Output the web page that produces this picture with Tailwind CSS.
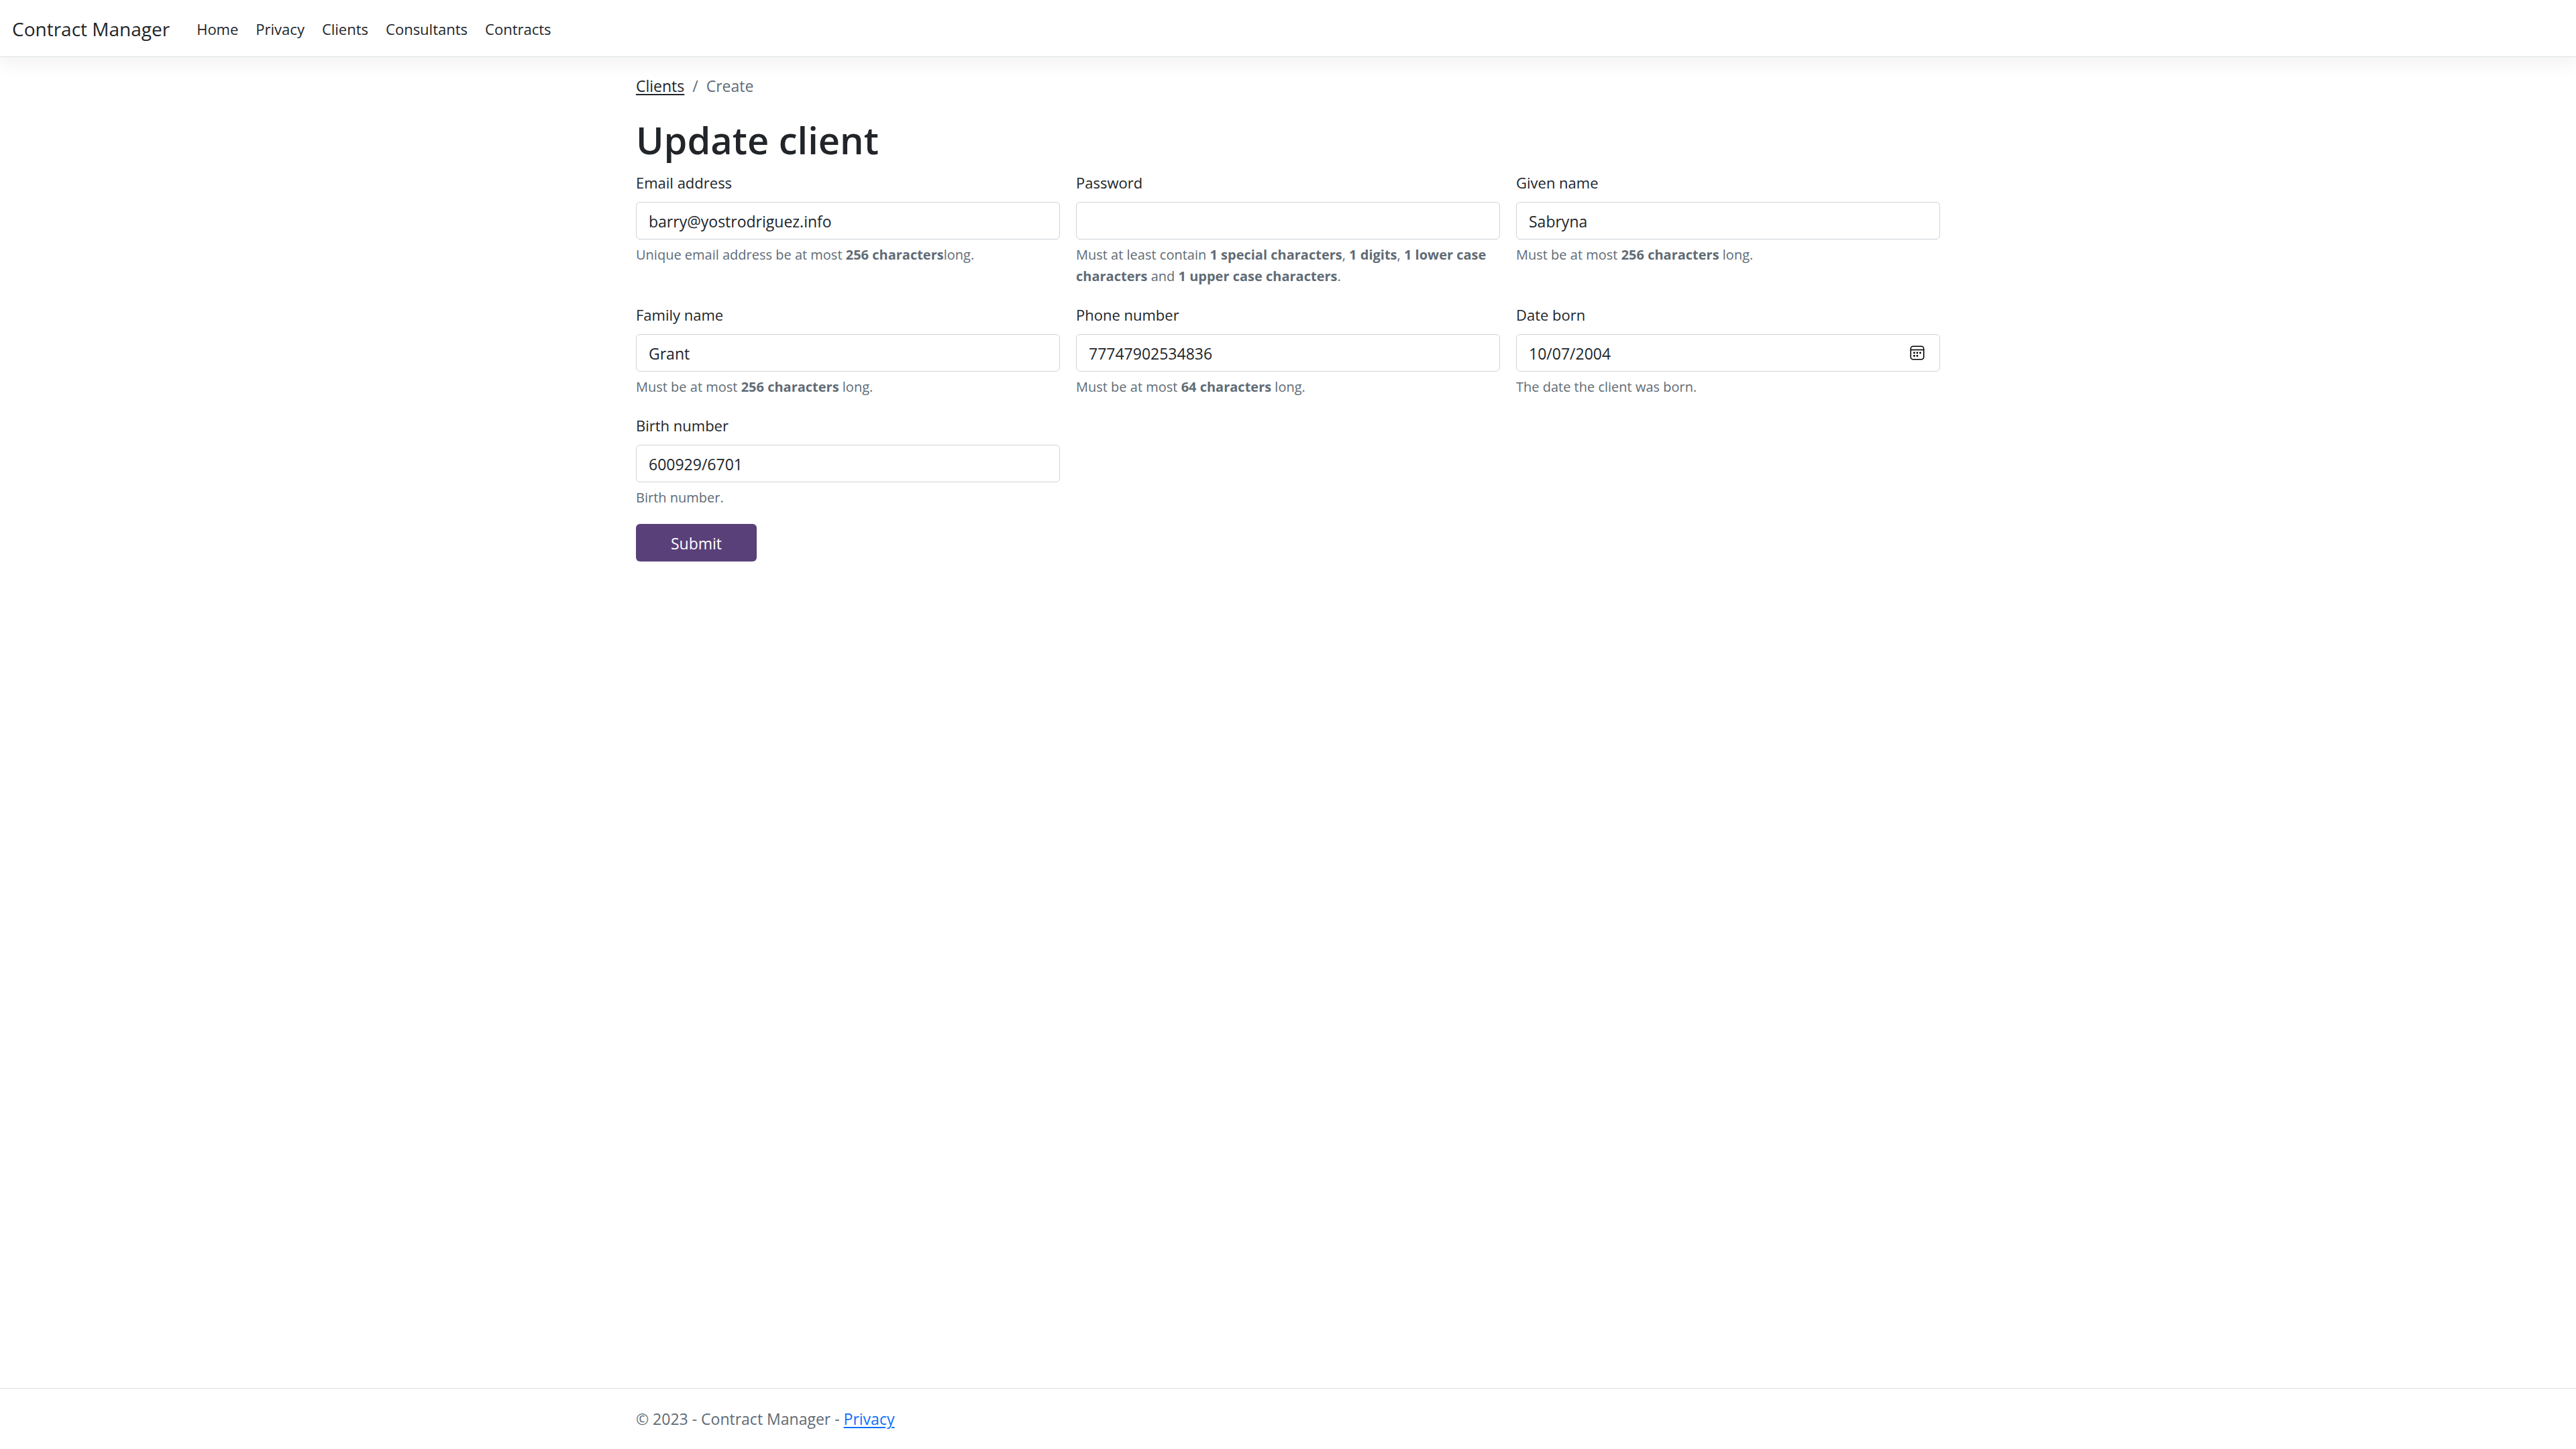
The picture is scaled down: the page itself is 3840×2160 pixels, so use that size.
<!DOCTYPE html>
<html lang="en">
<head>
<meta charset="utf-8">
<meta name="viewport" content="width=device-width, initial-scale=1">
<title>Update client - Contract Manager</title>
<script src="https://cdn.jsdelivr.net/npm/@tailwindcss/browser@4"></script>
</head>
<body class="flex min-h-screen flex-col bg-white font-['Open_Sans','Noto_Sans',sans-serif] text-[23px] leading-9 text-[#212529]">
  <header class="flex flex-wrap items-center gap-x-10 border-b border-[#dee2e6] px-[18px] pt-[25px] pb-[23px] shadow-[0_12px_24px_rgba(0,0,0,0.05)]">
    <a href="#" class="text-[28px] leading-9">Contract Manager</a>
    <nav class="flex flex-wrap gap-x-[26px] text-[22px] leading-9">
      <a href="#">Home</a>
      <a href="#">Privacy</a>
      <a href="#">Clients</a>
      <a href="#">Consultants</a>
      <a href="#">Contracts</a>
    </nav>
  </header>

  <main class="mx-auto w-full max-w-[1980px] flex-1 px-[18px] pt-[25px]">
    <nav aria-label="breadcrumb">
      <ol class="flex gap-3 text-[#5f6b75]">
        <li><a href="#" class="text-[#212529] underline decoration-2 underline-offset-3">Clients</a></li>
        <li aria-hidden="true">/</li>
        <li aria-current="page">Create</li>
      </ol>
    </nav>
    <h1 class="mt-7 mb-3 text-[56px] leading-[68px] font-semibold">Update client</h1>

    <form>
      <div class="grid grid-cols-1 gap-x-6 gap-y-[23px] md:grid-cols-3">
        <div>
          <label for="email" class="mb-[11px] block text-[22px] leading-9">Email address</label>
          <input id="email" type="email" value="barry@yostrodriguez.info" class="block h-14 w-full rounded-md border border-[#ced4da] bg-white px-[18px] pt-0.5">
          <p class="mt-[7px] text-xl leading-8 text-[#5f6b75]">Unique email address be at most <b>256 characters</b>long.</p>
        </div>
        <div>
          <label for="password" class="mb-[11px] block text-[22px] leading-9">Password</label>
          <input id="password" type="password" class="block h-14 w-full rounded-md border border-[#ced4da] bg-white px-[18px] pt-0.5">
          <p class="mt-[7px] text-xl leading-8 text-[#5f6b75]">Must at least contain <b>1 special characters</b>, <b>1 digits</b>, <b>1 lower case characters</b> and <b>1 upper case characters</b>.</p>
        </div>
        <div>
          <label for="given" class="mb-[11px] block text-[22px] leading-9">Given name</label>
          <input id="given" type="text" value="Sabryna" class="block h-14 w-full rounded-md border border-[#ced4da] bg-white px-[18px] pt-0.5">
          <p class="mt-[7px] text-xl leading-8 text-[#5f6b75]">Must be at most <b>256 characters</b> long.</p>
        </div>
        <div>
          <label for="family" class="mb-[11px] block text-[22px] leading-9">Family name</label>
          <input id="family" type="text" value="Grant" class="block h-14 w-full rounded-md border border-[#ced4da] bg-white px-[18px] pt-0.5">
          <p class="mt-[7px] text-xl leading-8 text-[#5f6b75]">Must be at most <b>256 characters</b> long.</p>
        </div>
        <div>
          <label for="phone" class="mb-[11px] block text-[22px] leading-9">Phone number</label>
          <input id="phone" type="tel" value="77747902534836" class="block h-14 w-full rounded-md border border-[#ced4da] bg-white px-[18px] pt-0.5">
          <p class="mt-[7px] text-xl leading-8 text-[#5f6b75]">Must be at most <b>64 characters</b> long.</p>
        </div>
        <div>
          <label for="born" class="mb-[11px] block text-[22px] leading-9">Date born</label>
          <div class="relative">
            <input id="born" type="date" value="2004-10-07" class="block h-14 w-full rounded-md border border-[#ced4da] bg-white px-[18px] pt-0.5 [&::-webkit-calendar-picker-indicator]:opacity-0 [&::-webkit-datetime-edit-fields-wrapper]:p-0 [&::-webkit-datetime-edit-month-field]:p-0 [&::-webkit-datetime-edit-day-field]:p-0 [&::-webkit-datetime-edit-year-field]:p-0">
            <svg class="pointer-events-none absolute top-4 right-[22px] size-6" viewBox="0 0 24 24" fill="none" stroke="#000" stroke-width="1.6" aria-hidden="true">
              <rect x="2.3" y="2.3" width="19.4" height="19.4" rx="3.5"/>
              <path d="M2.3 7.5h19.4"/>
              <g fill="#000" stroke="none"><circle cx="7.5" cy="12" r="1.4"/><circle cx="12" cy="12" r="1.4"/><circle cx="16.5" cy="12" r="1.4"/><circle cx="7.5" cy="16.5" r="1.4"/><circle cx="12" cy="16.5" r="1.4"/></g>
            </svg>
          </div>
          <p class="mt-[7px] text-xl leading-8 text-[#5f6b75]">The date the client was born.</p>
        </div>
        <div>
          <label for="birth" class="mb-[11px] block text-[22px] leading-9">Birth number</label>
          <input id="birth" type="text" value="600929/6701" class="block h-14 w-full rounded-md border border-[#ced4da] bg-white px-[18px] pt-0.5">
          <p class="mt-[7px] text-xl leading-8 text-[#5f6b75]">Birth number.</p>
        </div>
      </div>
      <button type="submit" class="mt-[23px] h-14 w-[180px] rounded-md bg-[#5a4079] pt-0.5 text-white">Submit</button>
    </form>
  </main>

  <footer class="border-t border-[#dee2e6] leading-[90px] text-[#5f6b75]">
    <div class="mx-auto max-w-[1980px] px-[18px]">© 2023 - Contract Manager - <a href="#" class="text-[#0d6efd] underline decoration-2 underline-offset-3">Privacy</a></div>
  </footer>
</body>
</html>
